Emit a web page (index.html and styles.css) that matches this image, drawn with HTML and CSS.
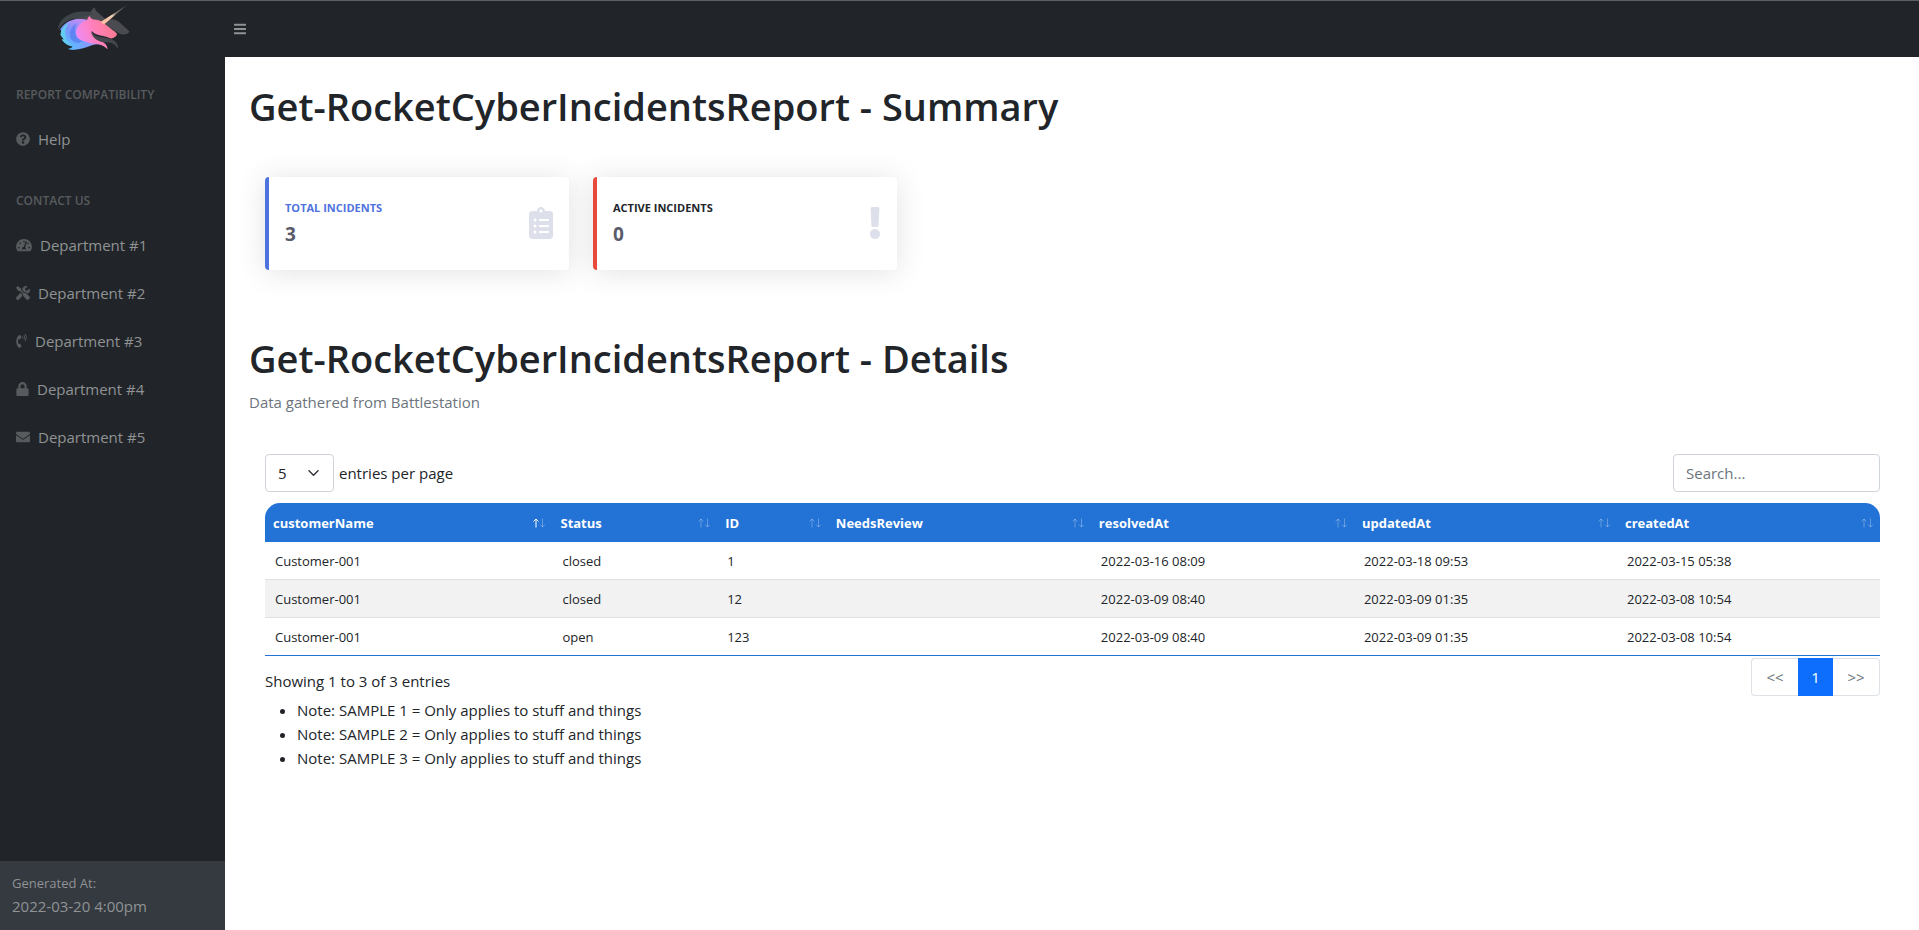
FILE: index.html
```html
<!DOCTYPE html>
<html lang="en">
<head>
<meta charset="utf-8">
<title>Get-RocketCyberIncidentsReport</title>
<link rel="stylesheet" href="styles.css">
</head>
<body>
<header class="topnav">
  <a class="brand" href="#" aria-label="Home">
    <svg class="logo" viewBox="0 0 90 60" aria-hidden="true">
      <defs>
        <linearGradient id="mane" x1="34" y1="20" x2="22" y2="50" gradientUnits="userSpaceOnUse">
          <stop offset="0" stop-color="#cf8cf2"/><stop offset=".45" stop-color="#7d95ff"/><stop offset="1" stop-color="#5bbcff"/>
        </linearGradient>
        <linearGradient id="face" x1="28" y1="42" x2="62" y2="28" gradientUnits="userSpaceOnUse">
          <stop offset="0" stop-color="#ee8cf8"/><stop offset=".5" stop-color="#ff80bd"/><stop offset="1" stop-color="#fb7b94"/>
        </linearGradient>
        <linearGradient id="neck" x1="16" y1="48" x2="57" y2="46" gradientUnits="userSpaceOnUse">
          <stop offset="0" stop-color="#5bc4ff"/><stop offset=".5" stop-color="#7e9dff"/><stop offset="1" stop-color="#f48af0"/>
        </linearGradient>
        <linearGradient id="horn" x1="52" y1="24" x2="77" y2="6" gradientUnits="userSpaceOnUse">
          <stop offset="0" stop-color="#ffb9a0"/><stop offset=".4" stop-color="#efd2b4"/><stop offset=".55" stop-color="#76716b"/><stop offset="1" stop-color="#48504d"/>
        </linearGradient>
      </defs>
      <path fill="#4a4b50" d="M24 20C30 13 36 12 41 13c0-2 2-4 4-4.500 0 2.500 1 3.500 3 5l8 7c7-1 12 0 16 5l7.500 7c-1 2-4 3.500-7 3-4-.5-7-4-12-6L44 26z"/>
      <path fill="#3d454a" d="M8 31c0-9 8-16 19-18 6-1 12-1 17 2L30 19c-9 0-16 3-22 12z"/>
      <path fill="url(#mane)" d="M10 31c3-6 10-11 18-11 4 0 8 0 11 2l5 21-11 4c-4 3-8 4-15 3 2-.5 3.500-1 4.500-2.500-4-.5-8-3-10.500-6.500l3 .5c-3-3-4-5.500-4-10.500z"/>
      <path fill="#62cdf0" d="M10.500 36c0-5 4-10 9-13-4 5-5 9-4 14 .5 4 3 7 7 10-5-1-9-4-11-7l3 .6c-2-1.600-3-3-4-4.600z"/>
      <path fill="#4a6be8" opacity=".5" d="M20 38c-1-6 2-11 7-14-3 5-3 11 1 15 3 3 6 4 9 5-8 1-15 0-17-6z"/>
      <path fill="url(#neck)" d="M18 50c6 0 9-3 12-7l12-1c8 0 15 2 15.500 8-5-5-10-5.500-15-4-8 3-16 6-24.500 4z"/>
      <path fill="url(#face)" d="M26 34c0-6 5-11 11-12.500.5-2 1-3 2.500-4.500 1 2 2 3 4 3.500 4 0 7 1 10 3.500l9 7c3 2 4.500 3 4.500 4.500-1 2-3 3.500-6 4-3-1-5-2-8-2.500-5-1-9-2-11-5 0 4 3 8 8 10 5 1.500 7 4 7.500 8-4-4-8-5-13-5.500C34 43 26 41 26 34z"/>
      <path fill="#45464d" d="M41 32c3 5 8 6 13 6.500 8 1 15 4 14 11.500-3-5-6-6.500-11-6.500-8 0-15-4-16-11.500z"/>
      <path fill="url(#horn)" d="M50.500 23 77 6 54 25.500z"/>
    </svg>
  </a>
  <button class="menu-toggle" type="button" aria-label="Toggle sidebar">
    <svg viewBox="0 0 448 512" aria-hidden="true"><path d="M16 132h416c8.837 0 16-7.163 16-16V76c0-8.837-7.163-16-16-16H16C7.163 60 0 67.163 0 76v40c0 8.837 7.163 16 16 16zm0 160h416c8.837 0 16-7.163 16-16v-40c0-8.837-7.163-16-16-16H16c-8.837 0-16 7.163-16 16v40c0 8.837 7.163 16 16 16zm0 160h416c8.837 0 16-7.163 16-16v-40c0-8.837-7.163-16-16-16H16c-8.837 0-16 7.163-16 16v40c0 8.837 7.163 16 16 16z"/></svg>
  </button>
</header>
<div class="layout">
  <aside class="sidebar">
    <nav class="menu">
      <h2 class="menu-heading">REPORT COMPATIBILITY</h2>
      <a class="menu-link" href="#"><svg viewBox="0 0 512 512" width="14" height="14" aria-hidden="true"><path d="M504 256c0 136.997-111.043 248-248 248S8 392.997 8 256C8 119.083 119.043 8 256 8s248 111.083 248 248zM262.655 90c-54.497 0-89.255 22.957-116.549 63.758-3.536 5.286-2.353 12.415 2.715 16.258l34.699 26.310c5.205 3.947 12.621 3.008 16.665-2.122 17.864-22.658 30.113-35.797 57.303-35.797 20.429 0 45.698 13.148 45.698 32.958 0 14.976-12.363 22.667-32.534 33.976C247.128 238.528 216 254.941 216 296v4c0 6.627 5.373 12 12 12h56c6.627 0 12-5.373 12-12v-1.333c0-28.462 83.186-29.647 83.186-106.667 0-58.002-60.165-102-116.531-102zM256 338c-25.365 0-46 20.635-46 46 0 25.364 20.635 46 46 46s46-20.636 46-46c0-25.365-20.635-46-46-46z"/></svg>Help</a>
      <h2 class="menu-heading">CONTACT US</h2>
      <a class="menu-link" href="#"><svg viewBox="0 0 576 512" width="16" height="14" aria-hidden="true"><path d="M288 32C128.940 32 0 160.940 0 320c0 52.800 14.250 102.260 39.060 144.800 5.610 9.620 16.300 15.200 27.440 15.200h443c11.140 0 21.830-5.580 27.440-15.200C561.750 422.260 576 372.800 576 320c0-159.060-128.940-288-288-288zm0 64c14.710 0 26.580 10.130 30.320 23.650-1.110 2.260-2.640 4.230-3.450 6.670l-9.220 27.670c-5.130 3.490-10.970 6.010-17.640 6.010-17.670 0-32-14.330-32-32S270.330 96 288 96zM96 384c-17.670 0-32-14.330-32-32s14.330-32 32-32 32 14.330 32 32-14.330 32-32 32zm48-160c-17.670 0-32-14.330-32-32s14.330-32 32-32 32 14.330 32 32-14.330 32-32 32zm246.770-72.410l-61.330 184C343.130 347.330 352 364.540 352 384c0 11.720-3.380 22.550-8.880 32H232.880c-5.500-9.450-8.880-20.280-8.880-32 0-33.940 26.500-61.430 59.900-63.590l61.340-184.010c4.170-12.560 17.730-19.450 30.360-15.170 12.570 4.190 19.350 17.790 15.170 30.360zm14.660 57.200l15.520-46.550c3.470-1.290 7.130-2.230 11.050-2.230 17.670 0 32 14.330 32 32s-14.330 32-32 32c-11.380-.01-21.250-6.100-26.570-15.220zM480 384c-17.670 0-32-14.330-32-32s14.330-32 32-32 32 14.330 32 32-14.330 32-32 32z"/></svg>Department #1</a>
      <a class="menu-link" href="#"><svg viewBox="0 0 512 512" width="14" height="14" aria-hidden="true"><path d="M501.100 395.700L384 278.600c-23.100-23.100-57.600-27.600-85.400-13.900L192 158.100V96L64 0 0 64l96 128h62.100l106.600 106.600c-13.600 27.800-9.200 62.300 13.900 85.400l117.100 117.100c14.600 14.600 38.200 14.600 52.700 0l52.700-52.700c14.500-14.600 14.500-38.200 0-52.700zM331.700 225c28.300 0 54.900 11 74.900 31l19.400 19.400c15.800-6.900 30.800-16.500 43.800-29.500 37.100-37.100 49.700-89.300 37.900-136.700-2.200-9-13.500-12.100-20.100-5.500l-74.400 74.400-67.900-11.300L334 98.900l74.400-74.400c6.600-6.600 3.400-17.900-5.700-20.200-47.400-11.700-99.600.9-136.600 37.900-28.500 28.500-41.900 66.100-41.200 103.600l82.100 82.100c8.100-1.900 16.500-2.900 24.700-2.900zm-103.900 82l-56.700-56.700L18.700 402.800c-25 25-25 65.500 0 90.500s65.500 25 90.500 0l123.600-123.600c-7.600-19.900-9.900-41.600-5-62.700z"/></svg>Department #2</a>
      <a class="menu-link" href="#"><svg viewBox="0 0 384 512" width="11" height="14" aria-hidden="true"><path d="M97.333 506.966c-129.874-129.874-129.681-340.252 0-469.933 5.698-5.698 14.527-6.632 21.263-2.422l64.817 40.513a17.187 17.187 0 0 1 6.849 20.958l-32.408 81.021a17.188 17.188 0 0 1-17.669 10.719l-55.810-5.580c-21.051 58.261-20.612 122.471 0 179.515l55.811-5.581a17.188 17.188 0 0 1 17.669 10.719l32.408 81.022a17.188 17.188 0 0 1-6.849 20.958l-64.817 40.513a17.190 17.190 0 0 1-21.264-2.422zM247.126 95.473c11.832 20.047 11.832 45.008 0 65.055-3.950 6.693-13.108 7.959-18.718 2.581l-5.975-5.726c-3.911-3.748-4.793-9.622-2.261-14.410a32.063 32.063 0 0 0 0-29.945c-2.533-4.788-1.650-10.662 2.261-14.410l5.975-5.726c5.610-5.378 14.768-4.112 18.718 2.581zm91.787-91.187c60.140 71.604 60.092 175.882 0 247.428-4.474 5.327-12.530 5.746-17.552.933l-5.798-5.557c-4.560-4.371-4.977-11.529-.930-16.379 49.687-59.538 49.646-145.933 0-205.422-4.047-4.850-3.631-12.008.930-16.379l5.798-5.557c5.022-4.813 13.078-4.394 17.552.933zm-45.972 44.941c36.050 46.322 36.108 111.149 0 157.546-4.390 5.641-12.697 6.251-17.856 1.304l-5.818-5.579c-4.400-4.219-4.998-11.095-1.285-15.931 26.536-34.564 26.534-82.572 0-117.134-3.713-4.836-3.115-11.711 1.285-15.931l5.818-5.579c5.159-4.947 13.466-4.337 17.856 1.304z"/></svg>Department #3</a>
      <a class="menu-link" href="#"><svg viewBox="0 0 448 512" width="13" height="14" aria-hidden="true"><path d="M400 224h-24v-72C376 68.200 307.800 0 224 0S72 68.200 72 152v72H48c-26.500 0-48 21.500-48 48v192c0 26.500 21.500 48 48 48h352c26.500 0 48-21.500 48-48V272c0-26.500-21.500-48-48-48zm-104 0H152v-72c0-39.700 32.300-72 72-72s72 32.300 72 72v72z"/></svg>Department #4</a>
      <a class="menu-link" href="#"><svg viewBox="0 0 512 512" width="14" height="14" aria-hidden="true"><path d="M502.300 190.800c3.900-3.100 9.700-.2 9.700 4.700V400c0 26.500-21.500 48-48 48H48c-26.500 0-48-21.500-48-48V195.600c0-5 5.700-7.800 9.700-4.700 22.400 17.400 52.100 39.500 154.100 113.600 21.100 15.400 56.700 47.800 92.200 47.600 35.700.3 72-32.800 92.300-47.600 102-74.100 131.600-96.300 154-113.700zM256 320c23.200.4 56.600-29.200 73.400-41.400 132.700-96.300 142.800-104.700 173.400-128.700 5.800-4.500 9.200-11.500 9.200-18.900v-19c0-26.500-21.500-48-48-48H48c-26.500 0-48 21.500-48 48v19c0 7.400 3.400 14.300 9.200 18.900 30.600 23.900 40.700 32.400 173.400 128.700 16.800 12.200 50.200 41.800 73.400 41.400z"/></svg>Department #5</a>
    </nav>
    <div class="sidebar-footer">
      <div class="footer-label">Generated At:</div>
      <div>2022-03-20 4:00pm</div>
    </div>
  </aside>
  <main class="content">
    <h1 class="title">Get-RocketCyberIncidentsReport - Summary</h1>
    <section class="cards">
      <article class="card card-total">
        <div>
          <div class="card-label">TOTAL INCIDENTS</div>
          <div class="card-value">3</div>
        </div>
        <svg class="card-icon" viewBox="0 0 384 512" width="24" height="32" aria-hidden="true"><path d="M336 64h-80c0-35.300-28.700-64-64-64s-64 28.700-64 64H48C21.500 64 0 85.500 0 112v352c0 26.500 21.500 48 48 48h288c26.500 0 48-21.500 48-48V112c0-26.500-21.500-48-48-48zM96 424c-13.300 0-24-10.700-24-24s10.700-24 24-24 24 10.700 24 24-10.700 24-24 24zm0-96c-13.300 0-24-10.700-24-24s10.700-24 24-24 24 10.700 24 24-10.700 24-24 24zm0-96c-13.300 0-24-10.700-24-24s10.700-24 24-24 24 10.700 24 24-10.700 24-24 24zm96-192c13.300 0 24 10.700 24 24s-10.700 24-24 24-24-10.700-24-24 10.700-24 24-24zm128 368c0 4.400-3.600 8-8 8H168c-4.400 0-8-3.600-8-8v-16c0-4.400 3.600-8 8-8h144c4.400 0 8 3.600 8 8v16zm0-96c0 4.400-3.600 8-8 8H168c-4.400 0-8-3.600-8-8v-16c0-4.400 3.600-8 8-8h144c4.400 0 8 3.600 8 8v16zm0-96c0 4.400-3.600 8-8 8H168c-4.400 0-8-3.600-8-8v-16c0-4.400 3.600-8 8-8h144c4.400 0 8 3.600 8 8v16z"/></svg>
      </article>
      <article class="card card-active">
        <div>
          <div class="card-label">ACTIVE INCIDENTS</div>
          <div class="card-value">0</div>
        </div>
        <svg class="card-icon" viewBox="0 0 192 512" width="12" height="32" aria-hidden="true"><path d="M176 432c0 44.112-35.888 80-80 80s-80-35.888-80-80 35.888-80 80-80 80 35.888 80 80zM25.260 25.199l13.600 272C39.499 309.972 50.041 320 62.830 320h66.340c12.789 0 23.331-10.028 23.970-22.801l13.600-272C167.425 11.490 156.496 0 142.770 0H49.230C35.504 0 24.575 11.490 25.260 25.199z"/></svg>
      </article>
    </section>
    <h1 class="title">Get-RocketCyberIncidentsReport - Details</h1>
    <p class="subtitle">Data gathered from Battlestation</p>
    <section class="details">
      <div class="toolbar">
        <label class="per-page"><select class="select"><option>5</option><option>10</option><option>25</option></select>entries per page</label>
        <input class="search" type="text" placeholder="Search..." aria-label="Search">
      </div>
      <table class="table">
        <colgroup><col class="c-name"><col class="c-status"><col class="c-id"><col class="c-date"><col class="c-date"><col class="c-date"><col class="c-date"></colgroup>
        <thead>
          <tr>
            <th><button class="sort asc" type="button">customerName<svg viewBox="0 0 12 10" aria-hidden="true"><path class="up" d="M3 9.500V1M.5 3.500 3 1l2.500 2.500"/><path class="down" d="M9.500.5V9M7 6.500 9.500 9 12 6.500"/></svg></button></th>
            <th><button class="sort" type="button">Status<svg viewBox="0 0 12 10" aria-hidden="true"><path class="up" d="M3 9.500V1M.5 3.500 3 1l2.500 2.500"/><path class="down" d="M9.500.5V9M7 6.500 9.500 9 12 6.500"/></svg></button></th>
            <th><button class="sort" type="button">ID<svg viewBox="0 0 12 10" aria-hidden="true"><path class="up" d="M3 9.500V1M.5 3.500 3 1l2.500 2.500"/><path class="down" d="M9.500.5V9M7 6.500 9.500 9 12 6.500"/></svg></button></th>
            <th><button class="sort" type="button">NeedsReview<svg viewBox="0 0 12 10" aria-hidden="true"><path class="up" d="M3 9.500V1M.5 3.500 3 1l2.500 2.500"/><path class="down" d="M9.500.5V9M7 6.500 9.500 9 12 6.500"/></svg></button></th>
            <th><button class="sort" type="button">resolvedAt<svg viewBox="0 0 12 10" aria-hidden="true"><path class="up" d="M3 9.500V1M.5 3.500 3 1l2.500 2.500"/><path class="down" d="M9.500.5V9M7 6.500 9.500 9 12 6.500"/></svg></button></th>
            <th><button class="sort" type="button">updatedAt<svg viewBox="0 0 12 10" aria-hidden="true"><path class="up" d="M3 9.500V1M.5 3.500 3 1l2.500 2.500"/><path class="down" d="M9.500.5V9M7 6.500 9.500 9 12 6.500"/></svg></button></th>
            <th><button class="sort" type="button">createdAt<svg viewBox="0 0 12 10" aria-hidden="true"><path class="up" d="M3 9.500V1M.5 3.500 3 1l2.500 2.500"/><path class="down" d="M9.500.5V9M7 6.500 9.500 9 12 6.500"/></svg></button></th>
          </tr>
        </thead>
        <tbody>
          <tr><td>Customer-001</td><td>closed</td><td>1</td><td></td><td>2022-03-16 08:09</td><td>2022-03-18 09:53</td><td>2022-03-15 05:38</td></tr>
          <tr><td>Customer-001</td><td>closed</td><td>12</td><td></td><td>2022-03-09 08:40</td><td>2022-03-09 01:35</td><td>2022-03-08 10:54</td></tr>
          <tr><td>Customer-001</td><td>open</td><td>123</td><td></td><td>2022-03-09 08:40</td><td>2022-03-09 01:35</td><td>2022-03-08 10:54</td></tr>
        </tbody>
      </table>
      <div class="table-footer">
        <div class="info">Showing 1 to 3 of 3 entries</div>
        <nav class="pagination" aria-label="Pages">
          <button class="page" type="button">&lt;&lt;</button><button class="page active" type="button">1</button><button class="page" type="button">&gt;&gt;</button>
        </nav>
      </div>
      <ul class="notes">
        <li>Note: SAMPLE 1 = Only applies to stuff and things</li>
        <li>Note: SAMPLE 2 = Only applies to stuff and things</li>
        <li>Note: SAMPLE 3 = Only applies to stuff and things</li>
      </ul>
    </section>
  </main>
</div>
</body>
</html>
```
FILE: styles.css
```css
* { box-sizing: border-box; }
body {
  margin: 0;
  min-height: 100vh;
  display: flex;
  flex-direction: column;
  font: 15px/24px "Open Sans", "Noto Sans", sans-serif;
  color: #212529;
  background: #fff;
}
button, input, select { font: inherit; color: inherit; }
a { text-decoration: none; }

.topnav {
  display: flex;
  align-items: center;
  height: 57px;
  background: #212529;
  border-top: 1px solid #5b6063;
}
.brand { width: 225px; padding-left: 50px; }
.logo { display: block; width: 90px; height: 60px; }
.menu-toggle {
  display: flex;
  padding: 8px 9px;
  border: 0;
  background: none;
}
.menu-toggle svg { width: 12px; height: 14px; fill: #909294; }

.layout { display: flex; flex: 1; }
.sidebar {
  display: flex;
  flex-direction: column;
  width: 225px;
  flex-shrink: 0;
  background: #212529;
  color: #909294;
}
.menu { flex: 1; display: flex; flex-direction: column; }
.menu-heading {
  margin: 0;
  padding: 29px 16px 11px;
  font-size: 12px;
  line-height: 18px;
  font-weight: 600;
  color: #585b5e;
}
.menu-link {
  display: flex;
  align-items: center;
  gap: 8px;
  padding: 12px 16px;
  color: #909294;
}
.menu-link svg { fill: #585b5e; }
.sidebar-footer { padding: 12px; background: #343a40; }
.footer-label { font-size: 13px; line-height: 21px; }

.content { flex: 1; min-width: 0; padding: 25px 24px 0; }
.title { margin: 0; font-size: 38px; line-height: 48px; font-weight: 600; }
.cards { display: flex; gap: 24px; padding: 47px 16px 64px; }
.card {
  display: flex;
  align-items: center;
  justify-content: space-between;
  width: 304px;
  height: 93px;
  padding: 0 16px 2px;
  border-left: 4px solid;
  border-radius: 4px;
  background: #fff;
  box-shadow: 0 2px 28px rgba(58, 59, 69, .15);
}
.card-total { border-color: #4e73df; }
.card-active { border-color: #e74a3b; }
.card-label { font-size: 11px; line-height: 18px; font-weight: 700; margin-bottom: 5px; }
.card-total .card-label { color: #4e73df; }
.card-value { font-size: 19px; line-height: 24px; font-weight: 700; color: #5a5c69; }
.card-icon { fill: #dddfeb; }
.subtitle { margin: 8px 0 0; color: #6c757d; }

.details { padding: 40px 15px 0 16px; }
.toolbar { display: flex; justify-content: space-between; align-items: center; }
.per-page { display: flex; align-items: center; gap: 5px; }
.select, .search {
  height: 38px;
  padding: 6px 12px;
  border: 1px solid #ced4da;
  border-radius: 4px;
  background: #fff;
}
.select {
  width: 69px;
  appearance: none;
  background: #fff url("data:image/svg+xml,%3Csvg xmlns='http://www.w3.org/2000/svg' viewBox='0 0 16 16'%3E%3Cpath fill='none' stroke='%23343a40' stroke-linecap='round' stroke-linejoin='round' stroke-width='2' d='M2 5l6 6 6-6'/%3E%3C/svg%3E") no-repeat right 13px center / 13px 12px;
}
.search { width: 207px; }
.search::placeholder { color: #6c757d; opacity: 1; }

.table {
  width: 100%;
  margin-top: 11px;
  table-layout: fixed;
  border-collapse: separate;
  border-spacing: 0;
  font-size: 13px;
}
.c-name { width: 17.800%; }
.c-status { width: 10.200%; }
.c-id { width: 6.850%; }
.table th { height: 39px; padding: 0; background: #2372d5; color: #fff; }
.table th:first-child { border-top-left-radius: 15px; }
.table th:last-child { border-top-right-radius: 15px; }
.sort {
  display: flex;
  align-items: center;
  justify-content: space-between;
  width: 100%;
  padding: 0 7px 0 8px;
  border: 0;
  background: none;
  font-weight: 700;
}
.sort svg { width: 12px; height: 10px; fill: none; stroke: #fff; }
.up, .down { opacity: .3; }
.asc .up { opacity: 1; }
.table td { height: 38px; padding: 0 10px; border-bottom: 1px solid #dee2e6; }
.table tbody tr:nth-child(even) { background: #f2f2f2; }
.table tbody tr:last-child td { border-bottom-color: #2372d5; }

.table-footer { display: flex; justify-content: space-between; align-items: flex-start; padding-top: 2px; }
.info { padding-top: 11px; }
.pagination { display: flex; }
.page {
  width: 47px;
  height: 38px;
  padding: 6px 0;
  border: 1px solid #dee2e6;
  background: #fff;
  color: #6c757d;
}
.page:first-child { border-radius: 4px 0 0 4px; border-right: 0; }
.page:last-child { border-radius: 0 4px 4px 0; border-left: 0; }
.page.active { width: 35px; background: #0d6efd; border-color: #0d6efd; color: #fff; }
.notes { margin: 2px 0 0; padding-left: 32px; }
```
